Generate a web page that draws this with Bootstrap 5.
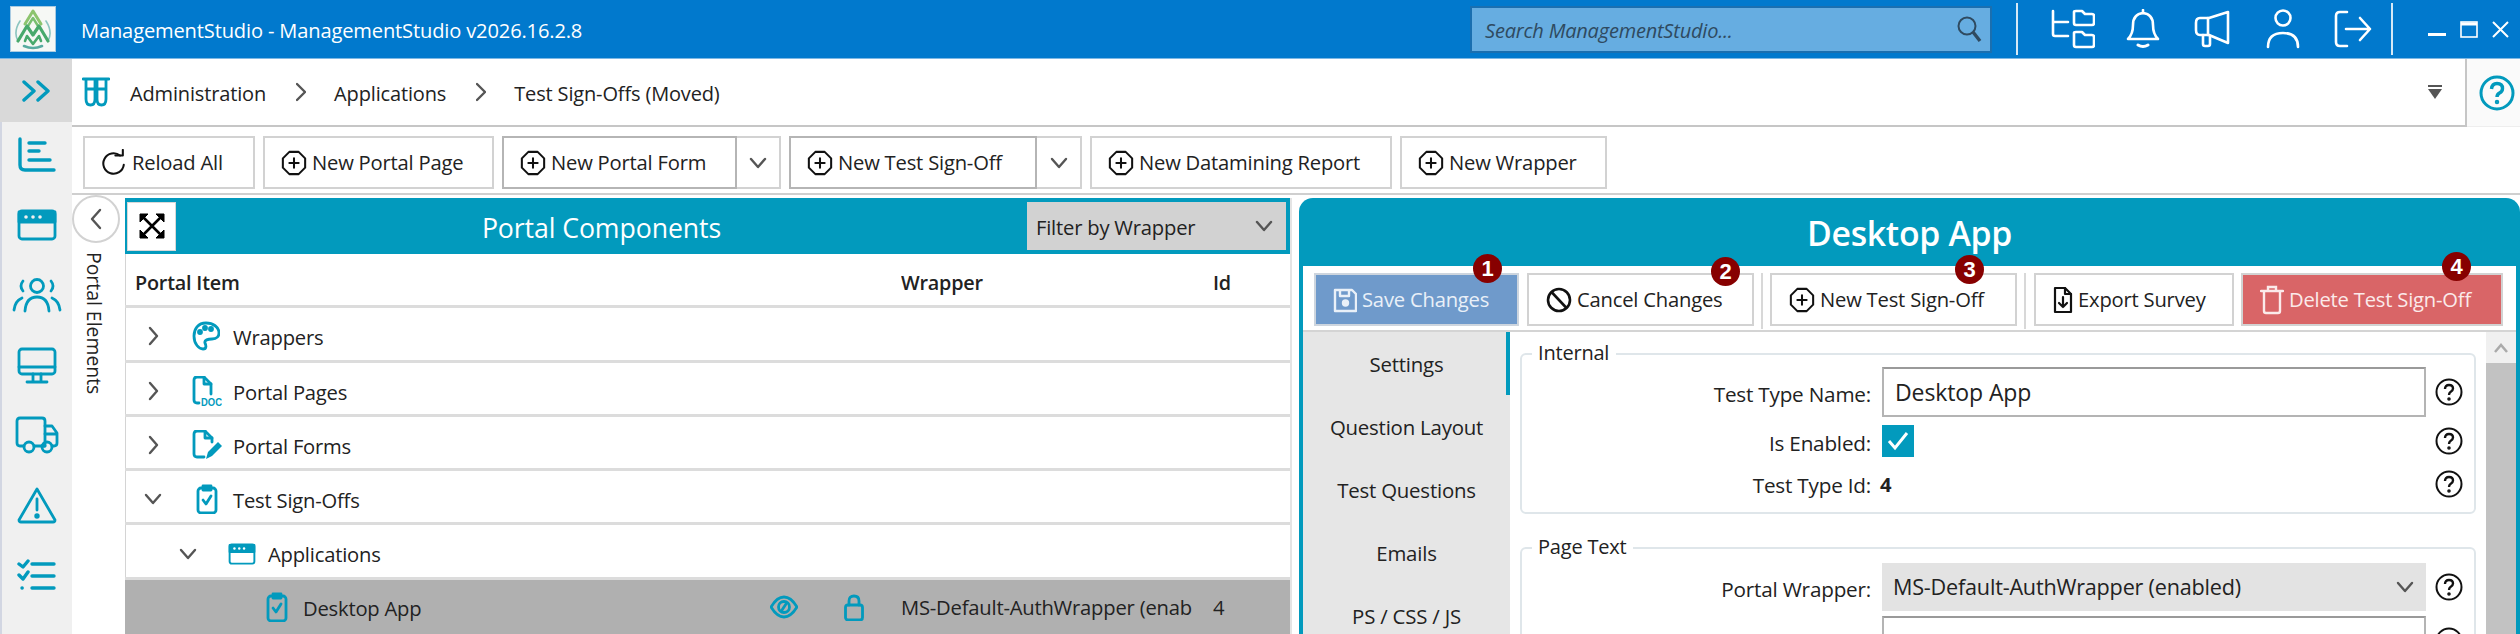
<!doctype html>
<html lang="en">
<head>
<meta charset="utf-8">
<title>ManagementStudio</title>
<link href="https://cdn.jsdelivr.net/npm/bootstrap@5.3.0/dist/css/bootstrap.min.css" rel="stylesheet">
<style>
html,body{height:634px;overflow:hidden;background:#fff}
body{font-family:"Open Sans","Noto Sans",sans-serif;font-size:20.2px;color:#222;letter-spacing:-.2px}
svg{display:block;flex:none}
.ico{fill:none;stroke:#029abd;stroke-width:2.8;stroke-linecap:round;stroke-linejoin:round}
.ico-heavy{stroke-width:3.4}
.wico{fill:none;stroke:#fff;stroke-width:2.6;stroke-linecap:round;stroke-linejoin:round}
.kico{fill:none;stroke:#111;stroke-width:2.2;stroke-linecap:round;stroke-linejoin:round}
.gico{fill:none;stroke:#555;stroke-width:2.4;stroke-linecap:round;stroke-linejoin:round}
.doclabel{fill:#029abd;stroke:none;font-family:"Liberation Sans",sans-serif;font-size:10px;font-weight:700;letter-spacing:0}
.appshell{width:2520px;height:634px}
.titlebar{height:59px;background:#0179cd;border-bottom:1px solid #7eb8e4;color:#fff;flex:none}
.logo-box{width:46px;height:46px;margin-left:10px;margin-top:-1px;background:#f6f8f5;border:1px solid #a9cbe2}
.app-title{margin-left:25px;padding-top:4px;font-size:20.1px;letter-spacing:-.15px;white-space:nowrap}
.searchbox{margin-left:auto;width:522px;height:47px;background:#66ade1;border:2px solid #1a6fb0;padding:0 8px 0 13px;font-style:italic;font-size:20px;letter-spacing:-.2px;color:#2f4a60}
.searchbox span{padding-top:3px}
.vsep{width:2px;height:52px;background:#d5e8f6;flex:none}
.tb-icons{width:373px;height:100%;padding-left:33px;gap:34px}
.nudge-l{margin-left:-3px}
.nudge-r{margin-left:2px}
.winctl{width:127px;padding-left:35px;gap:14px}
.bodyrow{height:575px}
.siderail{width:72px;background:#f0f0f0;border-left:2px solid #d2d6e2;flex:none}
.railtop{height:63px;margin-left:-2px;margin-bottom:-2px;background:#d9d9d9}
.railitem{height:70px;flex:none}
.mainpane{width:2448px}
.crumbrow{height:68px;flex:none}
.crumbbar{width:2395px;border-bottom:2px solid #c6c6c6;border-right:2px solid #c6c6c6;padding-left:10px}
.crumbbar span{font-size:20px;letter-spacing:-.15px;padding-top:4px}
.crumb-first{margin-left:20px}
.crumb-next{margin-left:28px}
.crumb-chev{margin-left:30px}
.crumb-drop{margin-left:auto;margin-right:23px}
.crumbhelp{flex:1;background:#fafafa;border-bottom:1px solid #eee;padding-left:12px}
.toolrow{height:68px;flex:none;border-bottom:2px solid #cfcfcf;padding:9px 0 0 11px;gap:8px}
.tbtn{height:53px;border:2px solid #d2d2d2;background:#fff;font-size:20.2px;color:#222;gap:5px;white-space:nowrap;padding-left:16px}
.tsplit{height:53px;display:flex}
.tsplit .tmain{border:2px solid #b5b5b5}
.tdrop{width:44px;height:53px;border:2px solid #d2d2d2;border-left:none;background:#fff}
.tdrop-w{width:45px}
.w172{width:172px;padding-left:15px}.w231{width:231px}.w235{width:235px}.w248{width:248px}.w302{width:302px}.w207{width:207px}
.splitrow{height:439px;padding-top:3px}
.collapsecol{width:53px;flex:none;position:relative}
.circlebtn{width:48px;height:48px;border:2px solid #d2d2d2;border-radius:50%;background:#fff;position:absolute;left:0;top:-3px}
.vtext{writing-mode:vertical-rl;font-size:19.4px;position:absolute;left:8px;top:54px;white-space:nowrap;letter-spacing:0;color:#222}
.portalpanel{width:1167px;flex:none;border-right:2px solid #e4e4e4;box-shadow:inset 1px 0 #d4d4d4}
.phead{height:56px;background:#029abd;padding:4px 4px 4px 2px;color:#fff}
.expandbtn{width:49px;height:49px;background:#fff;flex:none;border:1px solid #d8d8d8}
.phead-title{font-size:26.7px;flex:1;text-align:center;padding-top:5px;letter-spacing:-.1px}
.filterbox{width:259px;height:48px;background:#d2d2d2;color:#222;padding:0 13px 0 9px;font-size:20.2px}
.filterbox span{padding-top:2px}
.colhead{height:55px;border-bottom:3px solid #dcdcdc;font-weight:600;font-size:19.8px;padding-top:7px}
.cell-name{width:776px;flex:none;padding-left:10px}
.cell-wrap{width:312px;flex:none;overflow:hidden;white-space:nowrap}
.treerow{height:54.3px;border-bottom:3px solid #dcdcdc;font-size:20.2px;flex:none;padding-top:5px}
.treerow span{padding-top:2px}
.treerow.selrow{background:#b0b0b0;border-bottom:0;padding-top:1px}
.tw{width:30px;display:flex;justify-content:center;flex:none;margin-left:13px}
.tw-2{margin-left:48px}
.i-a{margin-left:24px}.i-b{margin-left:28px}.i-c{margin-left:25px}.i-d{margin-left:141px}
.t-a{margin-left:13px}.t-b{margin-left:11px}.t-c{margin-left:15px}.t-d{margin-left:12px}
.sel-name{width:467px}
.lockico{margin-left:46px}
.sel-wrap{margin-left:37px}
.rightpanel{flex:1;margin-left:7px;background:#029abd;border-radius:14px 14px 0 0;padding:0 4px;position:relative}
.rhead{height:68px;color:#fff;font-size:33.8px;font-weight:600;text-align:center;line-height:70px;letter-spacing:-.3px}
.rtools{height:66px;background:#fff;border-bottom:2px solid #d4d4d4;padding:7px 0 0 11px;position:relative;flex:none}
.rbtn{height:53px;border:2px solid #d2d2d2;background:#fff;font-size:20.2px;white-space:nowrap;gap:5px;flex:none;padding-left:17px}
.rbtn.savebtn{background:#6f9acb;color:#e9f0f8;border-color:#cdd5de;width:205px}
.rbtn.delbtn{background:#d96567;color:#fbeaea;width:262px;margin-left:7px}
.cancelbtn{width:227px;margin-left:8px}
.newbtn{width:247px}
.expbtn{width:200px}
.rsep{width:2px;height:56px;background:#d8d8d8;margin:0 7px;flex:none}
.rsep.rsep-b{margin-right:8px}
.numdot{position:absolute;width:29px;height:29px;border-radius:50%;background:#870000;color:#fff;font-size:22px;font-weight:700;display:flex;align-items:center;justify-content:center;z-index:2;letter-spacing:0;font-family:"Liberation Sans",sans-serif}
.nd1{left:170px;top:-12px}.nd2{left:408px;top:-9px}.nd3{left:652px;top:-11px}.nd4{left:1139px;top:-14px}
.rbody{background:#fff;height:305px}
.tabcol{width:207px;background:#e6e6e6;flex:none;position:relative;padding-top:1px}
.tabitem{height:62.9px;font-size:20.4px}
.tabmark{position:absolute;right:0;top:0;width:4px;height:63px;background:#029abd}
.formcol{width:976px;flex:none;padding:21px 0 0 10px;overflow:hidden}
.grpbox{width:956px;border:2px solid #dfe6ea;border-radius:6px;position:relative;flex:none}
.grplegend{position:absolute;left:10px;top:-17px;background:#fff;padding:0 7px 0 6px;font-size:20px}
.grp1{height:161px;margin-bottom:33px;padding-top:12px}
.grp2{height:200px;padding-top:14px}
.frow{display:flex;align-items:center}
.frow-b{margin-top:8px}
.frow-c{margin-top:12px}
.frow-d{margin-top:5px}
.flabel{width:349px;text-align:right;font-size:20.7px;line-height:26px;flex:none;padding-top:3px}
.fctl{width:544px;margin-left:11px;flex:none}
.fid{margin-left:9px;margin-right:2px;font-weight:700;line-height:26px}
.txtbox{height:50px;border:2px solid #b4b4b4;border-top-color:#9a9a9a;padding-left:11px;font-size:23px;display:flex;align-items:center;letter-spacing:-.1px}
.chkbox{width:32px;height:32px;background:#029abd;display:flex;align-items:center;justify-content:center}
.selbox{height:48px;background:#e3e3e3;padding:0 12px 0 11px;font-size:21.6px}
.helpcell{margin-left:9px;flex:none}
.scrollcol{width:30px;background:#f0f0f0;flex:none}
.scrolltop{height:31px}
.scrollthumb{flex:1;background:#c2c2c2;margin-bottom:3px}
</style>
</head>
<body>
<div class="appshell d-flex flex-column">
  <header class="titlebar d-flex align-items-center">
    <div class="logo-box d-flex align-items-center justify-content-center">
      <svg width="40" height="42" viewBox="0 0 40 42" fill="none" stroke-linecap="round" stroke-linejoin="round"><path d="M7 13Q0 24 5 33M33 13Q40 24 35 33" stroke="#8cc5c0" stroke-width="1.6"/><path d="M12 16L20 3L28 16" stroke="#8cc46e" stroke-width="3"/><path d="M15 18L20 10L25 18" stroke="#79bf70" stroke-width="2.4"/><path d="M5 33L14 18L20 27L26 18L35 33" stroke="#48a96c" stroke-width="3.2"/><path d="M12 33L14 28L20 36L26 28L28 33" stroke="#48a96c" stroke-width="2.6"/><path d="M11 38Q20 42 29 38" stroke="#57aba0" stroke-width="2.6"/></svg>
    </div>
    <div class="app-title">ManagementStudio - ManagementStudio v2026.16.2.8</div>
    <div class="searchbox d-flex align-items-center justify-content-between">
      <span>Search ManagementStudio...</span>
      <svg width="26" height="28" viewBox="0 0 26 28" fill="none" stroke="#2f4a60" stroke-width="2"><circle cx="11" cy="11" r="8.5"/><path d="M17 17 L24 26" stroke-width="3.4"/></svg>
    </div>
    <div class="vsep ms-4"></div>
    <div class="tb-icons d-flex align-items-center">
      <svg width="44" height="40" viewBox="0 0 44 40" class="wico"><path d="M2 2V25Q2 27 4 27H17M2 13H17"/><path d="M23 3Q23 2 25 2H31L34 5H41Q43 5 43 7V14Q43 16 41 16H25Q23 16 23 14Z"/><path d="M23 24Q23 23 25 23H31L34 26H41Q43 26 43 28V36Q43 38 41 38H25Q23 38 23 36Z"/></svg>
      <svg width="34" height="40" viewBox="0 0 34 40" class="wico nudge-l"><path d="M17 4Q27 5 27 16Q27 25 32 30H2Q7 25 7 16Q7 5 17 4Z"/><path d="M17 1V4"/><path d="M12 36Q17 39 22 36" stroke-width="3"/></svg>
      <svg width="36" height="38" viewBox="0 0 36 38" class="wico"><path d="M34 2V33L15 25H6Q2 25 2 20V13Q2 8 6 8H15Z"/><path d="M14 8V25"/><path d="M9 25V34Q9 36 11 36H14Q16 36 16 34V26"/></svg>
      <svg width="34" height="40" viewBox="0 0 34 40" class="wico nudge-r"><circle cx="17" cy="9" r="7.5"/><path d="M2 38Q2 24 17 24Q32 24 32 38"/></svg>
      <svg width="38" height="38" viewBox="0 0 38 38" class="wico"><path d="M13 2H6Q2 2 2 6V32Q2 36 6 36H13"/><path d="M12 19H36M26 8L36 19L26 30"/></svg>
    </div>
    <div class="vsep"></div>
    <div class="winctl d-flex align-items-center">
      <svg width="18" height="16" viewBox="0 0 18 16"><rect x="0" y="12" width="18" height="3" fill="#fff"/></svg>
      <svg width="18" height="17" viewBox="0 0 18 17" fill="none" stroke="#fff"><rect x="1" y="1" width="16" height="15" stroke-width="1.6"/><path d="M1 3H17" stroke-width="3"/></svg>
      <svg width="17" height="17" viewBox="0 0 17 17" fill="none" stroke="#fff" stroke-width="2"><path d="M1 1L16 16M16 1L1 16"/></svg>
    </div>
  </header>

  <div class="bodyrow d-flex">
    <nav class="siderail d-flex flex-column">
      <div class="railtop d-flex align-items-center justify-content-center">
        <svg width="30" height="22" viewBox="0 0 30 22" class="ico ico-heavy"><path d="M3 2L13 11L3 20M17 2L27 11L17 20"/></svg>
      </div>
      <div class="railitem d-flex align-items-center justify-content-center">
        <svg width="40" height="36" viewBox="0 0 40 36" class="ico ico-heavy"><path d="M3 2V28Q3 33 8 33H37M12 6H28M12 14H22M12 23H33"/></svg>
      </div>
      <div class="railitem d-flex align-items-center justify-content-center">
        <svg width="40" height="32" viewBox="0 0 40 32" class="ico"><rect x="2" y="2" width="36" height="28" rx="3"/><path d="M2 3H38V13H2Z" fill="#029abd"/><circle cx="9" cy="8" r="1.8" fill="#f0f0f0" stroke="none"/><circle cx="16" cy="8" r="1.8" fill="#f0f0f0" stroke="none"/><circle cx="23" cy="8" r="1.8" fill="#f0f0f0" stroke="none"/></svg>
      </div>
      <div class="railitem d-flex align-items-center justify-content-center">
        <svg width="50" height="36" viewBox="0 0 50 36" class="ico"><circle cx="25" cy="9" r="6.5"/><path d="M13 34Q14 20 25 20Q36 20 37 34"/><path d="M11 14Q7 9 11 4M39 14Q43 9 39 4M2 33Q3 24 10 21M48 33Q47 24 40 21"/></svg>
      </div>
      <div class="railitem d-flex align-items-center justify-content-center">
        <svg width="40" height="37" viewBox="0 0 40 37" class="ico"><rect x="2" y="2" width="36" height="25" rx="3"/><path d="M2 20H38M16 27V34M24 27V34M10 35H30"/></svg>
      </div>
      <div class="railitem d-flex align-items-center justify-content-center">
        <svg width="44" height="38" viewBox="0 0 44 38" class="ico"><path d="M9 30H5Q2 30 2 27V5Q2 2 5 2H27Q30 2 30 5V30H19"/><path d="M30 10H37L42 17V27Q42 30 39 30H37M30 30H27M30 18H42"/><circle cx="14" cy="31" r="5"/><circle cx="32" cy="31" r="5"/></svg>
      </div>
      <div class="railitem d-flex align-items-center justify-content-center">
        <svg width="40" height="38" viewBox="0 0 40 38" class="ico"><path d="M20 3L38 34Q38 36 36 36H4Q2 36 2 34Z"/><path d="M20 13V24"/><circle cx="20" cy="30" r="1.3"/></svg>
      </div>
      <div class="railitem d-flex align-items-center justify-content-center">
        <svg width="40" height="32" viewBox="0 0 40 32" class="ico ico-heavy"><path d="M2 5L6 8L11 2M2 16L6 20L11 13M15 5H37M15 17H37M15 29H37M5 29H5.2"/></svg>
      </div>
    </nav>

    <main class="mainpane d-flex flex-column">
      <div class="crumbrow d-flex">
        <div class="crumbbar d-flex align-items-center">
          <svg width="28" height="30" viewBox="0 0 28 30" class="ico"><path d="M1 2H27M4 2V22Q4 28 8.5 28Q13 28 13 22V2M15 2V22Q15 28 19.5 28Q24 28 24 22V2M4 12H13M15 12H24"/></svg>
          <span class="crumb-first">Administration</span>
          <svg class="gico crumb-chev" width="10" height="20" viewBox="0 0 10 20"><path d="M1 2L9 10L1 18"/></svg>
          <span class="crumb-next">Applications</span>
          <svg class="gico crumb-chev" width="10" height="20" viewBox="0 0 10 20"><path d="M1 2L9 10L1 18"/></svg>
          <span class="crumb-next">Test Sign-Offs (Moved)</span>
          <svg class="crumb-drop" width="14" height="14" viewBox="0 0 14 14"><rect x="0" y="0" width="14" height="2" fill="#555"/><path d="M0 4H14L7 14Z" fill="#555"/></svg>
        </div>
        <div class="crumbhelp d-flex align-items-center">
          <svg width="36" height="36" viewBox="0 0 36 36" fill="none" stroke="#029abd" stroke-width="3"><circle cx="18" cy="18" r="16"/><path d="M12.5 14Q13 8.5 18 8.5Q23.5 8.5 23.5 13.5Q23.5 16.5 20.5 18Q18 19.5 18 22" stroke-width="3.4"/><circle cx="18" cy="27" r="1" stroke-width="2.5"/></svg>
        </div>
      </div>

      <div class="toolrow d-flex">
        <div class="tbtn w172 d-flex align-items-center"><svg width="27" height="28" viewBox="0 0 28 30" class="kico"><path d="M21 7A11 11 0 1 0 25 17"/><path d="M16 7H24V1"/></svg>Reload All</div>
        <div class="tbtn w231 d-flex align-items-center"><svg width="26" height="26" viewBox="0 0 28 28" class="kico"><path d="M9 2H19L26 9V19L19 26H9L2 19V9Z"/><path d="M14 9V19M9 14H19"/></svg>New Portal Page</div>
        <div class="tsplit"><div class="tmain tbtn w235 d-flex align-items-center"><svg width="26" height="26" viewBox="0 0 28 28" class="kico"><path d="M9 2H19L26 9V19L19 26H9L2 19V9Z"/><path d="M14 9V19M9 14H19"/></svg>New Portal Form</div><div class="tdrop d-flex align-items-center justify-content-center"><svg class="gico" width="18" height="12" viewBox="0 0 18 12"><path d="M2 2L9 10L16 2"/></svg></div></div>
        <div class="tsplit"><div class="tmain tbtn w248 d-flex align-items-center"><svg width="26" height="26" viewBox="0 0 28 28" class="kico"><path d="M9 2H19L26 9V19L19 26H9L2 19V9Z"/><path d="M14 9V19M9 14H19"/></svg>New Test Sign-Off</div><div class="tdrop tdrop-w d-flex align-items-center justify-content-center"><svg class="gico" width="18" height="12" viewBox="0 0 18 12"><path d="M2 2L9 10L16 2"/></svg></div></div>
        <div class="tbtn w302 d-flex align-items-center"><svg width="26" height="26" viewBox="0 0 28 28" class="kico"><path d="M9 2H19L26 9V19L19 26H9L2 19V9Z"/><path d="M14 9V19M9 14H19"/></svg>New Datamining Report</div>
        <div class="tbtn w207 d-flex align-items-center"><svg width="26" height="26" viewBox="0 0 28 28" class="kico"><path d="M9 2H19L26 9V19L19 26H9L2 19V9Z"/><path d="M14 9V19M9 14H19"/></svg>New Wrapper</div>
      </div>

      <div class="splitrow d-flex">
        <div class="collapsecol">
          <div class="circlebtn d-flex align-items-center justify-content-center"><svg class="gico" width="14" height="22" viewBox="0 0 14 22"><path d="M11 2L3 11L11 20"/></svg></div>
          <div class="vtext">Portal Elements</div>
        </div>
        <section class="portalpanel d-flex flex-column">
          <div class="phead d-flex align-items-center">
            <div class="expandbtn d-flex align-items-center justify-content-center"><svg width="28" height="28" viewBox="0 0 28 28" fill="none" stroke="#000" stroke-width="2.6"><path d="M4 4L24 24M24 4L4 24"/><path d="M2 10V2H10Z M18 2H26V10Z M26 18V26H18Z M10 26H2V18Z" fill="#000" stroke-width="1"/></svg></div>
            <div class="phead-title">Portal Components</div>
            <div class="filterbox d-flex align-items-center justify-content-between"><span>Filter by Wrapper</span><svg class="gico" width="18" height="12" viewBox="0 0 18 12"><path d="M2 2L9 10L16 2"/></svg></div>
          </div>
          <div class="colhead d-flex align-items-center"><div class="cell-name">Portal Item</div><div class="cell-wrap">Wrapper</div><div>Id</div></div>

          <div class="treerow d-flex align-items-center">
            <div class="tw"><svg class="gico" width="12" height="22" viewBox="0 0 12 22"><path d="M3 3L10 11L3 19"/></svg></div>
            <svg class="ico i-a" width="28" height="30" viewBox="0 0 28 30"><path d="M14 2C6 2 2 8 2 15C2 23 7 28 11 28C15 28 14 24 13 22C12 19 16 18 20 18C25 18 27 15 27 12C27 6 21 2 14 2Z"/><circle cx="8" cy="11" r="1.5" fill="#029abd"/><circle cx="13" cy="7" r="1.5" fill="#029abd"/><circle cx="19" cy="8" r="1.5" fill="#029abd"/></svg>
            <span class="t-a">Wrappers</span>
          </div>
          <div class="treerow d-flex align-items-center">
            <div class="tw"><svg class="gico" width="12" height="22" viewBox="0 0 12 22"><path d="M3 3L10 11L3 19"/></svg></div>
            <svg class="ico i-a" width="30" height="30" viewBox="0 0 30 30"><path d="M7 27H5Q2 27 2 24V4Q2 1 5 1H12L19 8V18"/><path d="M12 1V8H19"/><text class="doclabel" x="9" y="29.5" textLength="21" lengthAdjust="spacingAndGlyphs">DOC</text></svg>
            <span class="t-b">Portal Pages</span>
          </div>
          <div class="treerow d-flex align-items-center">
            <div class="tw"><svg class="gico" width="12" height="22" viewBox="0 0 12 22"><path d="M3 3L10 11L3 19"/></svg></div>
            <svg class="ico i-a" width="30" height="30" viewBox="0 0 30 30"><path d="M12 27H5Q2 27 2 24V4Q2 1 5 1H13L20 8V12"/><path d="M13 1V8H20"/><path d="M14 29L16 22L26 12L30 16L20 26Z" fill="#029abd" stroke="none"/></svg>
            <span class="t-b">Portal Forms</span>
          </div>
          <div class="treerow d-flex align-items-center">
            <div class="tw"><svg class="gico" width="18" height="12" viewBox="0 0 18 12"><path d="M2 2L9 10L16 2"/></svg></div>
            <svg class="ico i-b" width="22" height="30" viewBox="0 0 22 30"><rect x="2" y="4" width="18" height="25" rx="3"/><path d="M7 2H15V6H7Z"/><path d="M7 16L10 20L15 12"/></svg>
            <span class="t-c">Test Sign-Offs</span>
          </div>
          <div class="treerow d-flex align-items-center">
            <div class="tw tw-2"><svg class="gico" width="18" height="12" viewBox="0 0 18 12"><path d="M2 2L9 10L16 2"/></svg></div>
            <svg class="ico i-c" width="28" height="22" viewBox="0 0 40 32"><rect x="2" y="2" width="36" height="28" rx="3"/><path d="M2 3H38V13H2Z" fill="#029abd"/><circle cx="9" cy="8" r="1.8" fill="#fff" stroke="none"/><circle cx="16" cy="8" r="1.8" fill="#fff" stroke="none"/><circle cx="23" cy="8" r="1.8" fill="#fff" stroke="none"/></svg>
            <span class="t-d">Applications</span>
          </div>
          <div class="treerow selrow d-flex align-items-center">
            <svg class="ico i-d" width="22" height="30" viewBox="0 0 22 30"><rect x="2" y="4" width="18" height="25" rx="3"/><path d="M7 2H15V6H7Z"/><path d="M7 16L10 20L15 12"/></svg>
            <span class="t-c sel-name">Desktop App</span>
            <svg class="ico" width="28" height="24" viewBox="0 0 28 24"><path d="M1 12Q7 2 14 2Q21 2 27 12Q21 22 14 22Q7 22 1 12Z"/><circle cx="14" cy="12" r="5.5"/><path d="M12 15L16 9"/></svg>
            <svg class="ico lockico" width="20" height="27" viewBox="0 0 20 27"><rect x="1.5" y="11" width="17" height="15" rx="2.5"/><path d="M5 11V7Q5 2 10 2Q15 2 15 7V11"/></svg>
            <div class="cell-wrap sel-wrap">MS-Default-AuthWrapper (enab</div>
            <div>4</div>
          </div>
        </section>

        <section class="rightpanel d-flex flex-column">
          <div class="rhead">Desktop App</div>
          <div class="rtools d-flex">
            <span class="numdot nd1">1</span>
            <span class="numdot nd2">2</span>
            <span class="numdot nd3">3</span>
            <span class="numdot nd4">4</span>
            <div class="rbtn savebtn d-flex align-items-center"><svg width="24" height="26" viewBox="0 0 24 26" fill="none" stroke="#e9f0f8" stroke-width="2.4" stroke-linejoin="round"><path d="M2 3H19L23 7V24H2Z"/><path d="M7 3V9H16V3"/><circle cx="12.5" cy="16" r="2.5" fill="#e9f0f8"/></svg>Save Changes</div>
            <div class="rbtn cancelbtn d-flex align-items-center"><svg width="26" height="28" viewBox="0 0 26 28" fill="none" stroke="#111" stroke-width="2.6"><circle cx="13" cy="14" r="11"/><path d="M5.5 6L20.5 22"/></svg>Cancel Changes</div>
            <div class="rsep"></div>
            <div class="rbtn newbtn d-flex align-items-center"><svg width="26" height="26" viewBox="0 0 28 28" class="kico"><path d="M9 2H19L26 9V19L19 26H9L2 19V9Z"/><path d="M14 9V19M9 14H19"/></svg>New Test Sign-Off</div>
            <div class="rsep rsep-b"></div>
            <div class="rbtn expbtn d-flex align-items-center"><svg width="20" height="28" viewBox="0 0 20 28" class="kico"><path d="M2 2H12L18 8V26H2Z"/><path d="M12 2V8H18"/><path d="M10 11V21M6 17L10 21L14 17"/></svg>Export Survey</div>
            <div class="rbtn delbtn d-flex align-items-center"><svg width="24" height="30" viewBox="0 0 24 30" fill="none" stroke="#fbeaea" stroke-width="2.4" stroke-linecap="round"><path d="M1 6H23M8 5V2H16V5M4 6V26Q4 28 6 28H18Q20 28 20 26V6"/></svg>Delete Test Sign-Off</div>
          </div>
          <div class="rbody d-flex">
            <div class="tabcol">
              <div class="tabmark"></div>
              <div class="tabitem d-flex align-items-center justify-content-center">Settings</div>
              <div class="tabitem d-flex align-items-center justify-content-center">Question Layout</div>
              <div class="tabitem d-flex align-items-center justify-content-center">Test Questions</div>
              <div class="tabitem d-flex align-items-center justify-content-center">Emails</div>
              <div class="tabitem d-flex align-items-center justify-content-center">PS / CSS / JS</div>
            </div>
            <div class="formcol d-flex flex-column">
              <div class="grpbox grp1">
                <span class="grplegend">Internal</span>
                <div class="frow"><div class="flabel">Test Type Name:</div><div class="fctl txtbox">Desktop App</div><div class="helpcell"><svg width="28" height="28" viewBox="0 0 28 28" fill="none" stroke="#111" stroke-width="2"><circle cx="14" cy="14" r="12.5"/><path d="M10 11Q10 7 14 7Q18 7 18 10.5Q18 12.5 15.5 14Q14 15 14 17" stroke-width="2.4"/><circle cx="14" cy="21" r=".8" stroke-width="2"/></svg></div></div>
                <div class="frow frow-b"><div class="flabel">Is Enabled:</div><div class="fctl"><div class="chkbox"><svg width="22" height="20" viewBox="0 0 22 20" fill="none" stroke="#fff" stroke-width="3"><path d="M2 10L8 17L20 2"/></svg></div></div><div class="helpcell"><svg width="28" height="28" viewBox="0 0 28 28" fill="none" stroke="#111" stroke-width="2"><circle cx="14" cy="14" r="12.5"/><path d="M10 11Q10 7 14 7Q18 7 18 10.5Q18 12.5 15.5 14Q14 15 14 17" stroke-width="2.4"/><circle cx="14" cy="21" r=".8" stroke-width="2"/></svg></div></div>
                <div class="frow frow-c"><div class="flabel">Test Type Id:</div><div class="fctl fid">4</div><div class="helpcell"><svg width="28" height="28" viewBox="0 0 28 28" fill="none" stroke="#111" stroke-width="2"><circle cx="14" cy="14" r="12.5"/><path d="M10 11Q10 7 14 7Q18 7 18 10.5Q18 12.5 15.5 14Q14 15 14 17" stroke-width="2.4"/><circle cx="14" cy="21" r=".8" stroke-width="2"/></svg></div></div>
              </div>
              <div class="grpbox grp2">
                <span class="grplegend">Page Text</span>
                <div class="frow"><div class="flabel">Portal Wrapper:</div><div class="fctl selbox d-flex align-items-center justify-content-between"><span>MS-Default-AuthWrapper (enabled)</span><svg class="gico" width="18" height="12" viewBox="0 0 18 12"><path d="M2 2L9 10L16 2"/></svg></div><div class="helpcell"><svg width="28" height="28" viewBox="0 0 28 28" fill="none" stroke="#111" stroke-width="2"><circle cx="14" cy="14" r="12.5"/><path d="M10 11Q10 7 14 7Q18 7 18 10.5Q18 12.5 15.5 14Q14 15 14 17" stroke-width="2.4"/><circle cx="14" cy="21" r=".8" stroke-width="2"/></svg></div></div>
                <div class="frow frow-d"><div class="flabel"></div><div class="fctl txtbox"></div><div class="helpcell"><svg width="28" height="28" viewBox="0 0 28 28" fill="none" stroke="#111" stroke-width="2"><circle cx="14" cy="14" r="12.5"/></svg></div></div>
              </div>
            </div>
            <div class="scrollcol d-flex flex-column">
              <div class="scrolltop d-flex justify-content-center align-items-center"><svg width="16" height="10" viewBox="0 0 16 10" fill="none" stroke="#aaa" stroke-width="2.5"><path d="M2 9L8 2L14 9"/></svg></div>
              <div class="scrollthumb"></div>
            </div>
          </div>
        </section>
      </div>
    </main>
  </div>
</div>
<script src="https://cdn.jsdelivr.net/npm/bootstrap@5.3.0/dist/js/bootstrap.bundle.min.js"></script>
</body>
</html>
